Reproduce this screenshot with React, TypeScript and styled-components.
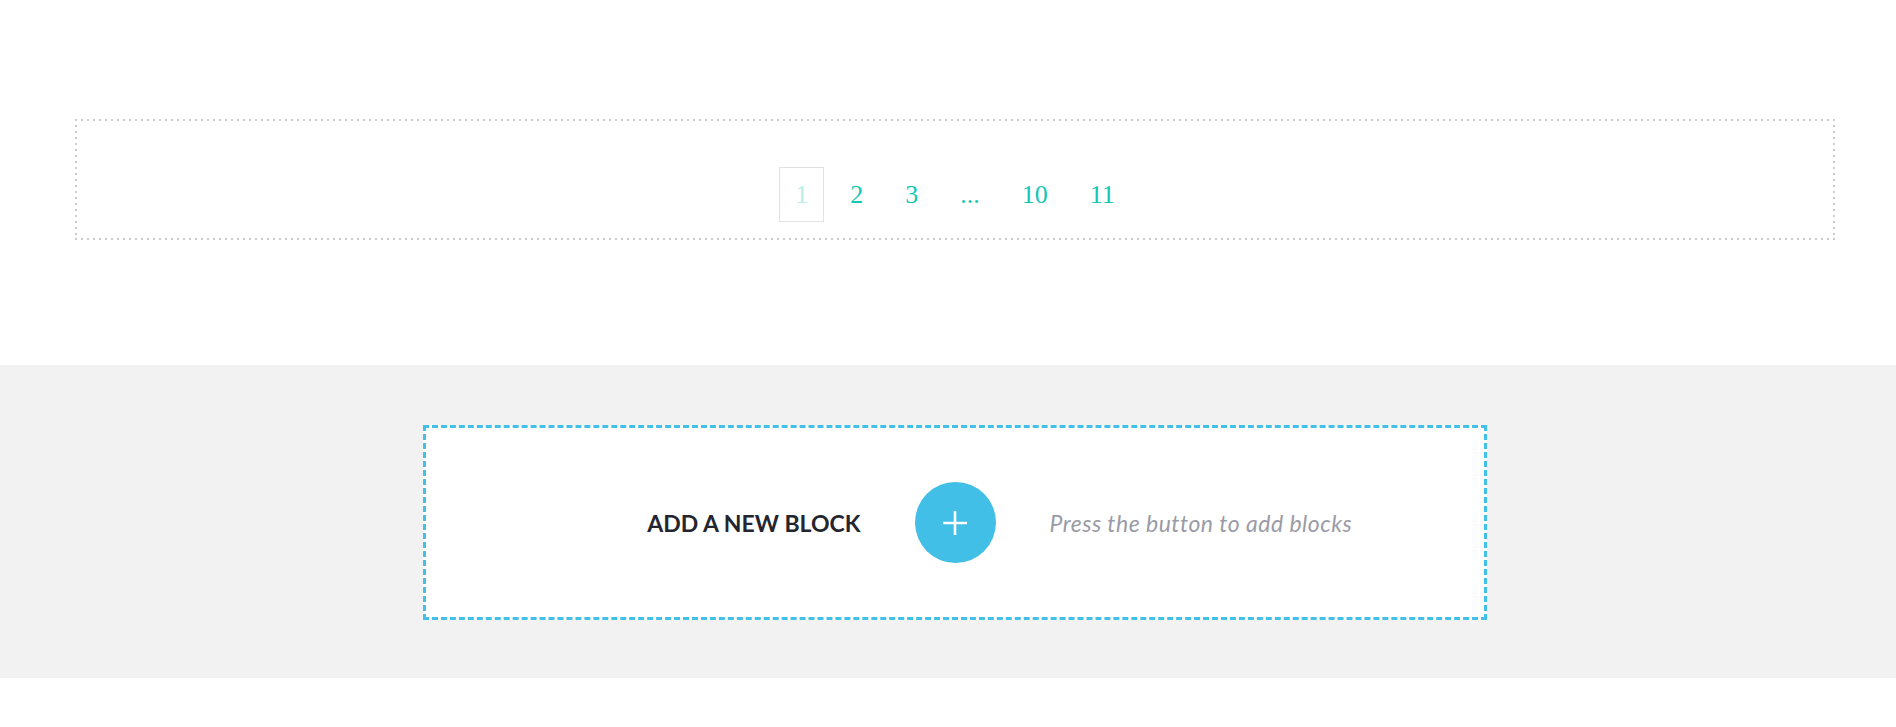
import styled, { createGlobalStyle } from "styled-components";

const GlobalStyle = createGlobalStyle`
  html, body {
    margin: 0;
    padding: 0;
    background: #fff;
  }
  * { box-sizing: border-box; }
`

const dots = "#cbcbcb"

const TopSection = styled.section`
  width: 100%;
  height: 365px;
  padding: 119px 61px 0 75px;
  background: #fff;
`
// dotted frame: 2px dots every 6px, like the original
const PagerFrame = styled.div`
  width: 100%;
  height: 121px;
  padding-top: 2px;
  background-image:
    repeating-linear-gradient(to right, ${dots} 0 2px, transparent 2px 6px),
    repeating-linear-gradient(to right, ${dots} 0 2px, transparent 2px 6px),
    repeating-linear-gradient(to bottom, ${dots} 0 2px, transparent 2px 6px),
    repeating-linear-gradient(to bottom, ${dots} 0 2px, transparent 2px 6px);
  background-size: 100% 2px, 100% 2px, 2px 100%, 2px 100%;
  background-position: left top, left bottom, left top, right top;
  background-repeat: no-repeat;
`
const Pager = styled.ul`
  list-style: none;
  margin: 46px 0 0;
  padding: 0;
  display: flex;
  justify-content: center;
  gap: 10px;
`
const PageItem = styled.li<{ $active?: boolean }>`
  height: 55px;
  padding: 0 15px;
  border: 1px solid ${props => props.$active ? "#e2e2e2" : "transparent"};
  line-height: 53px;
  font-family: "Liberation Serif", serif;
  font-size: 26px;
  color: ${props => props.$active ? "#b8efe8" : "#12c8b4"};
  cursor: pointer;
`

const AddSection = styled.section`
  width: 100%;
  padding: 60px 0 58px 14px;
  background: #f2f2f2;
`
const AddBox = styled.div`
  width: 1064px;
  height: 195px;
  margin: 0 auto;
  border: 3px dashed #41c0e8;
  background: #fff;
  display: grid;
  grid-template-columns: 1fr auto 1fr;
  align-items: center;
  column-gap: 54px;
`
const AddTitle = styled.div`
  justify-self: end;
  font-family: "Lato", "Noto Sans", sans-serif;
  font-weight: 700;
  font-size: 23px;
  color: #24252f;
  text-transform: uppercase;
`
const AddButton = styled.button`
  width: 81px;
  height: 81px;
  border-radius: 50%;
  border: none;
  padding: 0;
  background: #41bfe6;
  display: flex;
  align-items: center;
  justify-content: center;
  cursor: pointer;
`
const AddHint = styled.div`
  justify-self: start;
  font-family: "Lato", "Noto Sans", sans-serif;
  font-style: italic;
  font-size: 23px;
  letter-spacing: 0.5px;
  color: #9a9ba6;
`

const pages = [
  { label: "1", active: true },
  { label: "2" },
  { label: "3" },
  { label: "..." },
  { label: "10" },
  { label: "11" },
]

function App() {
  return (
    <>
      <GlobalStyle />
      <TopSection>
        <PagerFrame>
          <Pager>
            {pages.map((p) => (
              <PageItem key={p.label} $active={p.active}>{p.label}</PageItem>
            ))}
          </Pager>
        </PagerFrame>
      </TopSection>
      <AddSection>
        <AddBox>
          <AddTitle>Add a new block</AddTitle>
          <AddButton aria-label="Add block">
            <svg width="24" height="24" viewBox="0 0 24 24">
              <path d="M12 0V24M0 12H24" stroke="#fff" strokeWidth="2.6" />
            </svg>
          </AddButton>
          <AddHint>Press the button to add blocks</AddHint>
        </AddBox>
      </AddSection>
    </>
  )
}
export default App;
